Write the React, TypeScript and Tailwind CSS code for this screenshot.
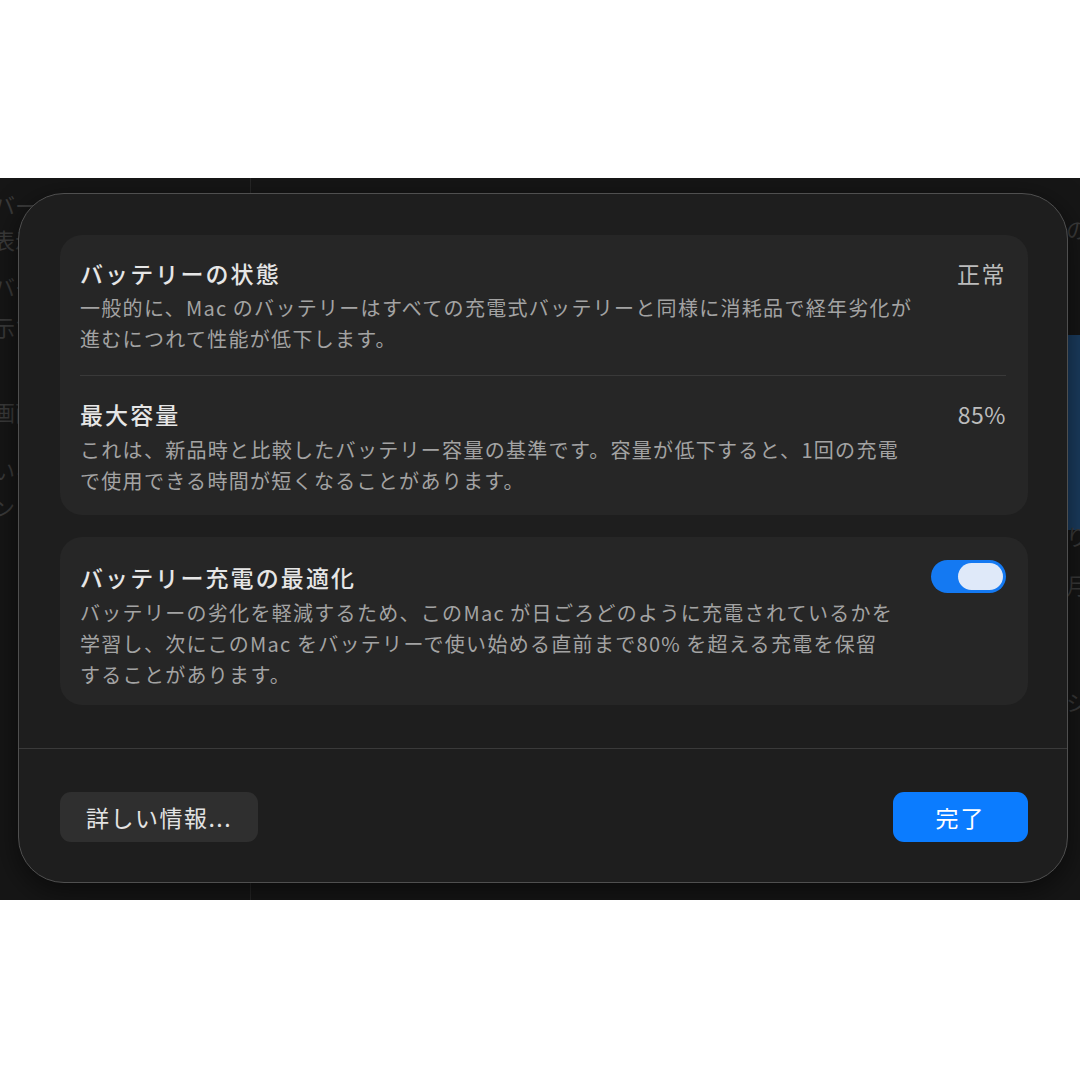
import React from "react";

const font = { fontFamily: '"Noto Sans CJK JP", "Noto Sans", sans-serif' };

/** Faint fragments of the window behind the sheet. */
function Backdrop() {
  const left = [
    { t: "バー", y: 26 },
    { t: "表示", y: 61 },
    { t: "バー", y: 108 },
    { t: "示す", y: 148 },
    { t: "画面", y: 233 },
    { t: "いる", y: 291 },
    { t: "ン", y: 328 },
  ];
  const right = [
    { t: "の", y: 50 },
    { t: "り", y: 357 },
    { t: "月", y: 406 },
    { t: "シ", y: 523 },
  ];
  return (
    <>
      <div className="absolute left-[250px] top-0 h-full w-px bg-[#262626]" />
      <div className="absolute left-[1060px] top-[157px] h-[195px] w-[20px] bg-[#1b3d60]" />
      {left.map((l, i) => (
        <div
          key={i}
          className="absolute left-[-7px] text-[22px] leading-[30px] text-[#3a3a3a]"
          style={{ top: l.y - 15 }}
        >
          {l.t}
        </div>
      ))}
      {right.map((r, i) => (
        <div
          key={i}
          className="absolute left-[1066px] text-[22px] leading-[30px] text-[#3a3a3a]"
          style={{ top: r.y - 15 }}
        >
          {r.t}
        </div>
      ))}
    </>
  );
}

function Title({ children }: { children: React.ReactNode }) {
  return (
    <div className="text-[23px] leading-[30px] font-medium tracking-[2.1px] text-[#e6e6e6] whitespace-nowrap">
      {children}
    </div>
  );
}

function Desc({ lines, className }: { lines: string[]; className?: string }) {
  return (
    <div className={className}>
      {lines.map((l, i) => (
        <div
          key={i}
          className="text-[20px] leading-[31px] tracking-[1.3px] text-[#a3a3a3] whitespace-nowrap"
        >
          {l}
        </div>
      ))}
    </div>
  );
}

function Toggle() {
  return (
    <div className="flex h-[33px] w-[75px] items-center justify-end rounded-full bg-[#1479f2] pr-[3px]">
      <div className="h-[27px] w-[45px] rounded-full bg-[#dfe9f9]" />
    </div>
  );
}

export default function App() {
  return (
    <div className="flex h-[1080px] w-[1080px] flex-col bg-white" style={font}>
      <div className="h-[178px]" />
      <div className="relative h-[722px] overflow-hidden bg-[#161616]">
        <Backdrop />

        {/* Sheet */}
        <div className="relative z-10 ml-[18px] mt-[15px] flex h-[690px] w-[1050px] flex-col rounded-[46px] border border-[#4f4f4f] bg-[#1e1e1e] shadow-[0_8px_30px_rgba(0,0,0,0.55)]">
          <div className="flex flex-col gap-[22px] pl-[41px] pr-[39px] pt-[41px]">
            {/* Battery state card */}
            <div className="h-[280px] rounded-[22px] bg-[#262626] pl-[20px] pr-[22px]">
              <div className="pb-[21px] pt-[23px]">
                <div className="flex items-center justify-between">
                  <Title>バッテリーの状態</Title>
                  <div className="text-[23px] leading-[30px] tracking-[1.5px] text-[#bcbcbc]">正常</div>
                </div>
                <Desc
                  className="mt-[4px]"
                  lines={[
                    "一般的に、Mac\u2009のバッテリーはすべての充電式バッテリーと同様に消耗品で経年劣化が",
                    "進むにつれて性能が低下します。",
                  ]}
                />
              </div>
              <div className="h-px bg-[#393939]" />
              <div className="pt-[23px]">
                <div className="flex items-center justify-between">
                  <Title>最大容量</Title>
                  <div className="text-[23px] leading-[30px] tracking-[0.5px] text-[#bcbcbc]">85%</div>
                </div>
                <Desc
                  className="mt-[5px]"
                  lines={[
                    "これは、新品時と比較したバッテリー容量の基準です。容量が低下すると、1回の充電",
                    "で使用できる時間が短くなることがあります。",
                  ]}
                />
              </div>
            </div>

            {/* Optimised charging card */}
            <div className="h-[168px] rounded-[22px] bg-[#262626] pl-[20px] pr-[22px] pt-[23px]">
              <div className="flex items-center justify-between">
                <Title>バッテリー充電の最適化</Title>
                <Toggle />
              </div>
              <Desc
                className="mt-[4px]"
                lines={[
                  "バッテリーの劣化を軽減するため、このMac\u2009が日ごろどのように充電されているかを",
                  "学習し、次にこのMac\u2009をバッテリーで使い始める直前まで80%\u2009を超える充電を保留",
                  "することがあります。",
                ]}
              />
            </div>
          </div>

          <div className="mt-[43px] h-px bg-[#3a3a3a]" />

          <div className="flex items-center justify-between pl-[41px] pr-[39px] pt-[43px]">
            <button className="h-[50px] w-[198px] rounded-[11px] bg-[#2f2f2f] text-[23px] tracking-[1.5px] text-[#e3e3e3]">
              詳しい情報...
            </button>
            <button className="h-[50px] w-[135px] rounded-[11px] bg-[#0b7cff] text-[23px] tracking-[2px] text-white">
              完了
            </button>
          </div>
        </div>
      </div>
    </div>
  );
}
